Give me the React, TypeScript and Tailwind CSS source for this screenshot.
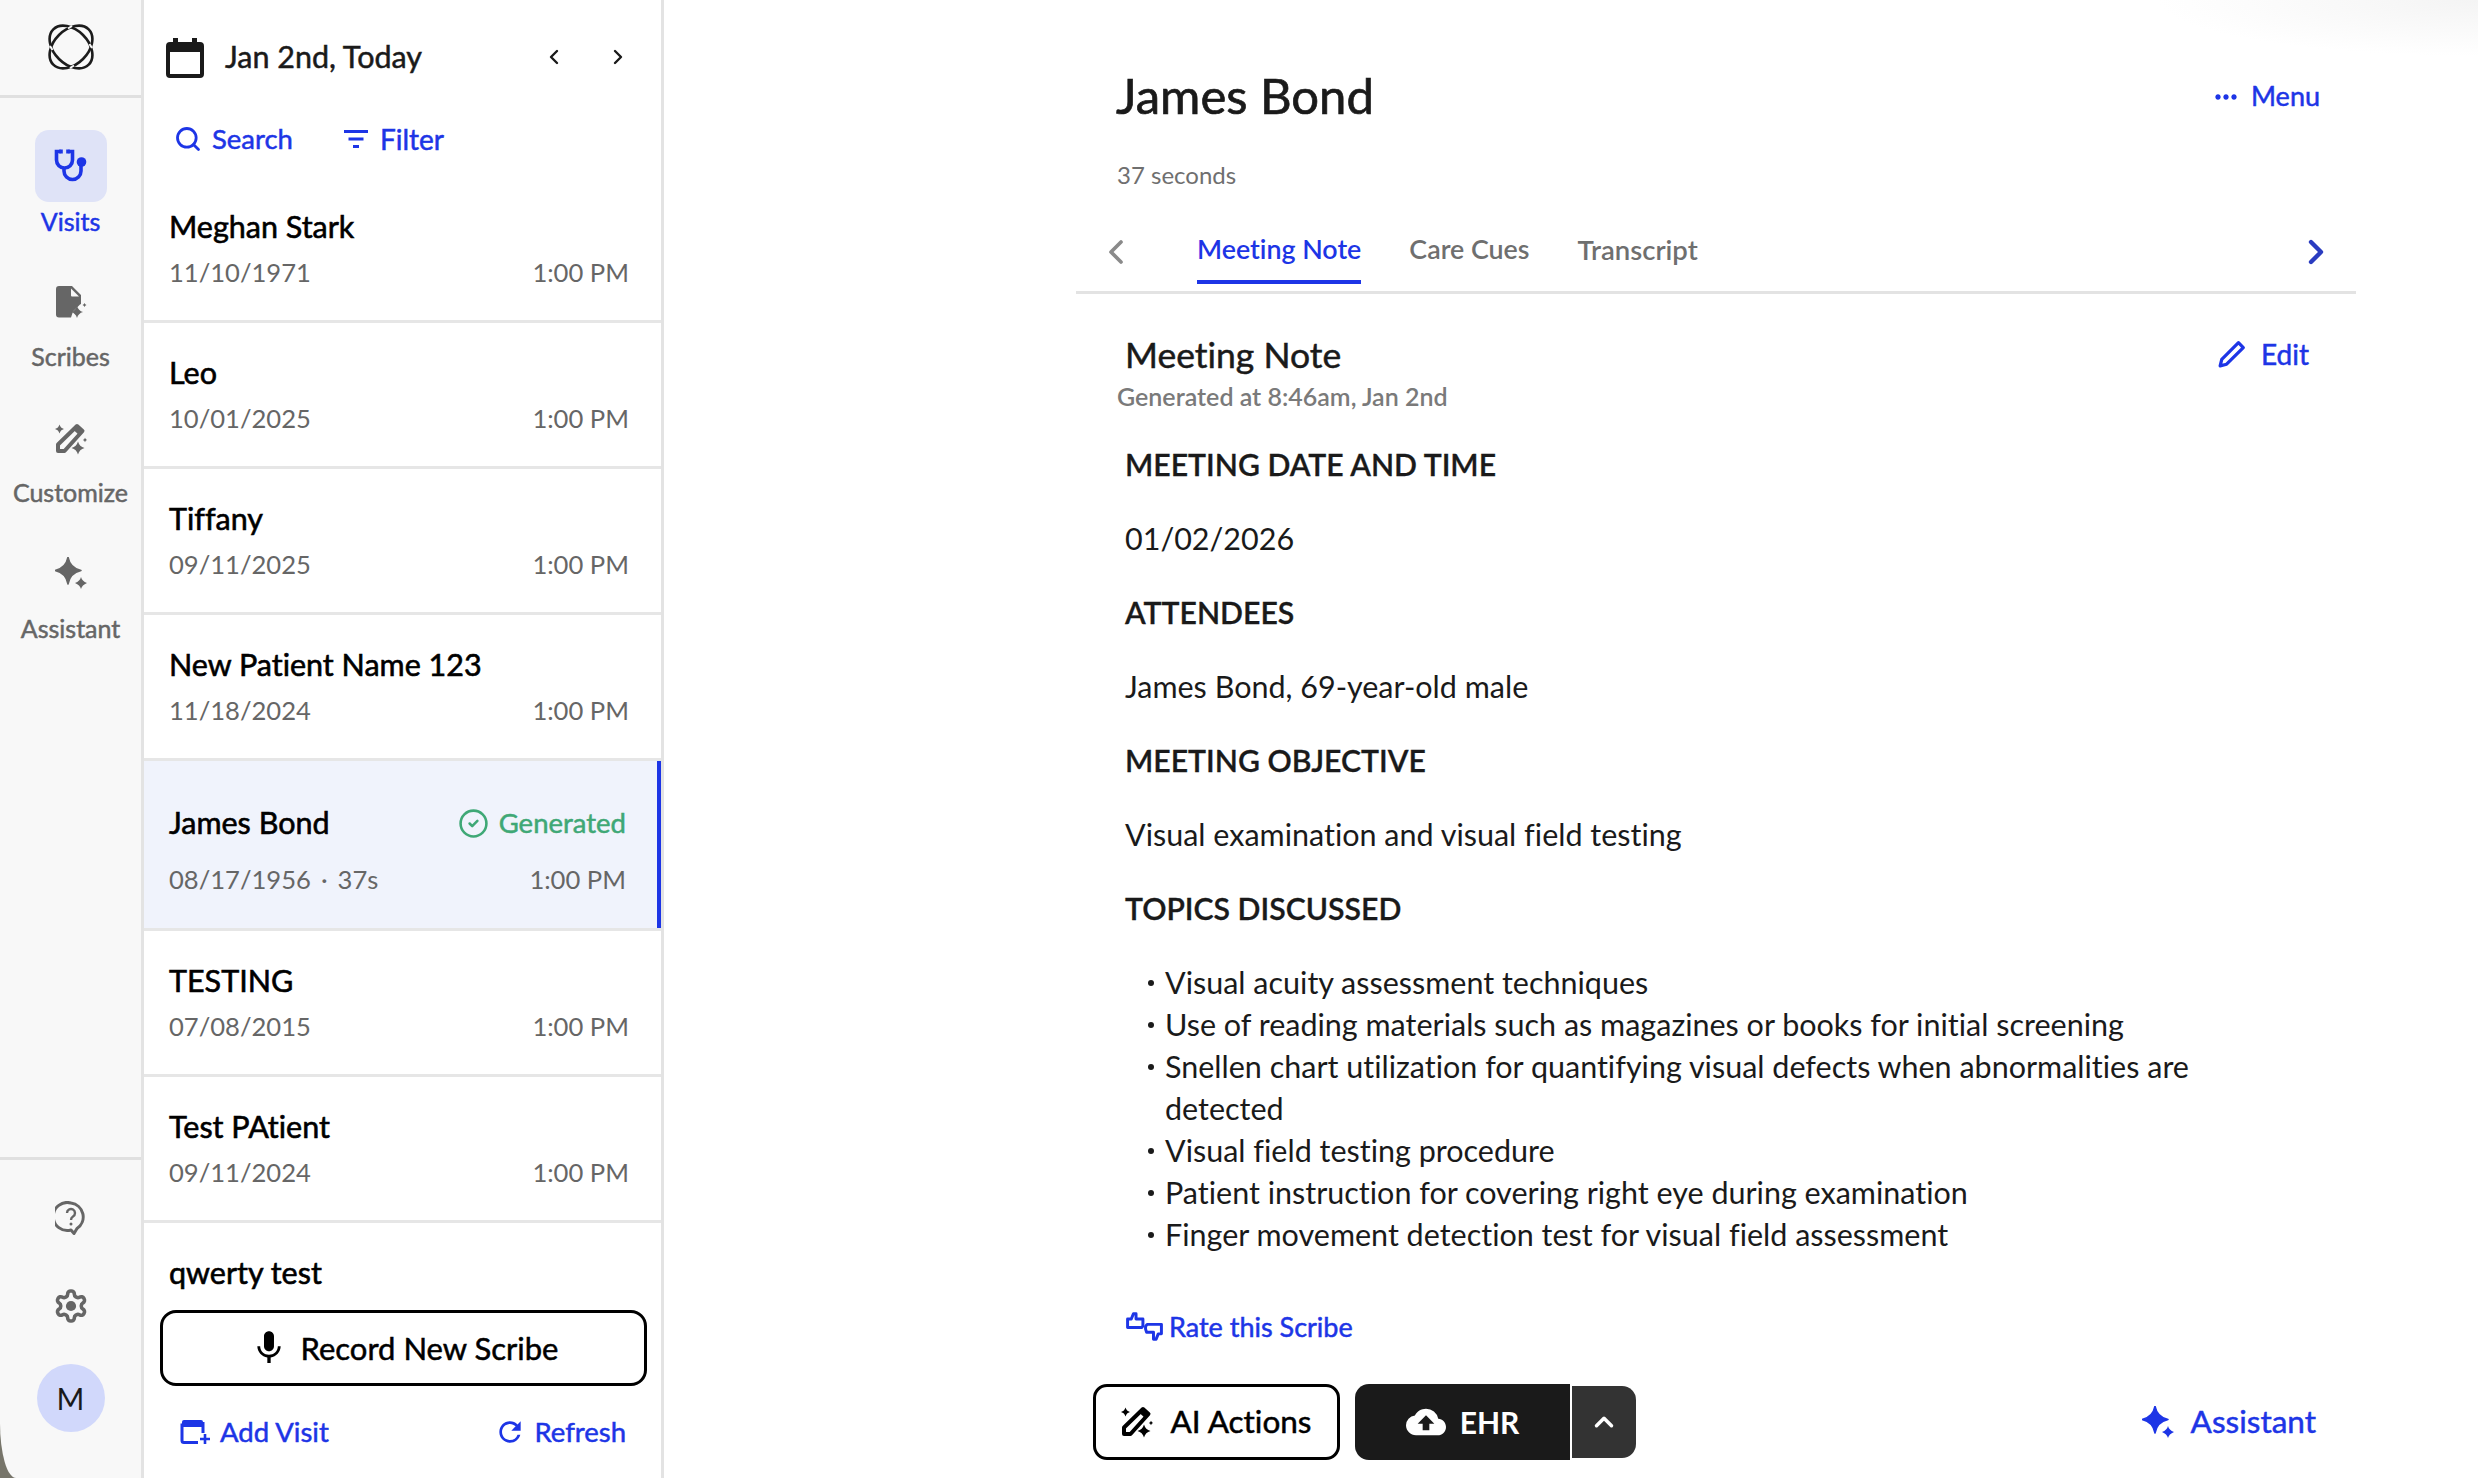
import { ChevronLeft, ChevronRight, ChevronUp, CircleCheck, Search } from 'lucide-react';
import { MdCloudUpload, MdMic, MdMoreHoriz, MdRefresh } from 'react-icons/md';

interface Visit {
  name: string;
  dob: string;
}

const visitsTop: Visit[] = [
  { name: 'Meghan Stark', dob: '11/10/1971' },
  { name: 'Leo', dob: '10/01/2025' },
  { name: 'Tiffany', dob: '09/11/2025' },
  { name: 'New Patient Name 123', dob: '11/18/2024' },
];

const visitsBottom: Visit[] = [
  { name: 'TESTING', dob: '07/08/2015' },
  { name: 'Test PAtient', dob: '09/11/2024' },
];

const topics = [
  ['Visual acuity assessment techniques'],
  ['Use of reading materials such as magazines or books for initial screening'],
  ['Snellen chart utilization for quantifying visual defects when abnormalities are', 'detected'],
  ['Visual field testing procedure'],
  ['Patient instruction for covering right eye during examination'],
  ['Finger movement detection test for visual field assessment'],
];

const sections = [
  { title: 'MEETING DATE AND TIME', body: '01/02/2026' },
  { title: 'ATTENDEES', body: 'James Bond, 69-year-old male' },
  { title: 'MEETING OBJECTIVE', body: 'Visual examination and visual field testing' },
];

function Sparkle({ x, y, r }: { x: number; y: number; r: number }) {
  const c = r * 0.22;
  return (
    <path
      d={`M${x} ${y - r}Q${x + c} ${y - c} ${x + r} ${y}Q${x + c} ${y + c} ${x} ${y + r}Q${x - c} ${y + c} ${x - r} ${y}Q${x - c} ${y - c} ${x} ${y - r}Z`}
      fill="currentColor"
    />
  );
}

function WandIcon({ className }: { className: string }) {
  return (
    <svg className={className} viewBox="0 0 32 32" fill="none">
      <path d="M22 3l5.500 5L9.500 28H3v-6.500z" stroke="currentColor" strokeWidth="4" strokeLinejoin="round" />
      <path d="M22 2l6.500 6-4 4.500-6.500-6z" fill="currentColor" />
      <Sparkle x={4.500} y={6} r={4.500} />
      <Sparkle x={23} y={25} r={6.500} />
      <Sparkle x={30} y={17} r={2.200} />
    </svg>
  );
}

function StarsIcon({ className }: { className: string }) {
  return (
    <svg className={className} viewBox="0 0 32 32" fill="none">
      <path d="M13 0Q15 11 26 13.500Q15 16 13 27Q11 16 0 13.500Q11 11 13 0Z" fill="currentColor" stroke="currentColor" strokeWidth="1.500" strokeLinejoin="round" />
      <path d="M26 20Q27 24 32 26Q27 28 26 32Q25 28 20 26Q25 24 26 20Z" fill="currentColor" />
    </svg>
  );
}

function Sidebar() {
  return (
    <aside className="w-[144px] shrink-0 flex flex-col bg-[#f8f8f8] border-r-[3px] border-[#e3e3e3] rounded-bl-[16px_55px]">
      <div className="h-[98px] shrink-0 flex items-center justify-center border-b-[3px] border-[#e0e0e0] pb-[2px]">
        <svg className="w-[46px] h-[46px] text-[#1c1c1c]" viewBox="0 0 46 46" fill="none" stroke="currentColor" strokeWidth="2.6">
          <ellipse cx="23" cy="23" rx="25" ry="17" transform="rotate(45 23 23)" />
          <ellipse cx="23" cy="23" rx="25" ry="17" transform="rotate(-45 23 23)" />
          {/* weave gaps where the two rings cross */}
          <path d="M20 4.500l4-2.500M26 41.500l-4 2.500M4.500 26l-2.500-4M41.500 20l2.500 4" stroke="#f8f8f8" strokeWidth="2" />
        </svg>
      </div>

      <nav className="flex flex-col items-center pt-[32px]">
        <div className="w-[72px] h-[72px] rounded-[14px] bg-[#dfe3f7] flex items-center justify-center">
          <svg className="w-[34px] h-[34px] text-[#1d35e6]" viewBox="0 0 34 34" fill="none" stroke="currentColor" strokeWidth="3.600">
            <path d="M7 2.500H2.500v8.500a8 8 0 0 0 16 0V2.500H14" />
            <path d="M10 19v3a8.500 8.500 0 0 0 17 0v-7" />
            <circle cx="27.500" cy="13" r="4.800" fill="currentColor" stroke="none" />
            <path d="M7 0.500v4M14 0.500v4" />
          </svg>
        </div>
        <span className="mt-[3px] text-[25px] leading-[32px] [-webkit-text-stroke:0.5px] text-[#1d35e6]">Visits</span>

        <svg className="mt-[49px] w-[32px] h-[32px] text-[#666]" viewBox="0 0 32 32">
          <path d="M4 0h13l9 9v9l-1 .5-7 7-2 6H4a3 3 0 0 1-3-3V3a3 3 0 0 1 3-3z" fill="currentColor" />
          <path d="M16 2.500v7a1 1 0 0 0 1 1h7z" fill="#f8f8f8" />
          <Sparkle x={22} y={26} r={6} />
          <Sparkle x={29.500} y={19} r={2} />
        </svg>
        <span className="mt-[22px] text-[25px] leading-[32px] [-webkit-text-stroke:0.5px] text-[#666]">Scribes</span>

        <WandIcon className="mt-[51px] w-[32px] h-[32px] text-[#666]" />
        <span className="mt-[21px] text-[25px] leading-[32px] [-webkit-text-stroke:0.5px] text-[#666]">Customize</span>

        <StarsIcon className="mt-[49px] w-[32px] h-[32px] text-[#666]" />
        <span className="mt-[23px] text-[25px] leading-[32px] [-webkit-text-stroke:0.5px] text-[#666]">Assistant</span>
      </nav>

      <div className="mt-auto h-[321px] shrink-0 border-t-[3px] border-[#e0e0e0] flex flex-col items-center">
        <svg className="mt-[41px] w-[32px] h-[34px] text-[#666]" viewBox="0 0 32 34" fill="none" stroke="currentColor" strokeWidth="3">
          <path d="M16 2a14 14 0 1 0 0 27l3 3.500 3-5a14 14 0 0 0-6-25.500z" strokeLinejoin="round" />
          <path d="M12 12a4 4 0 1 1 6 3.500c-1.500 1-2 1.500-2 3.500" strokeWidth="2.400" />
          <circle cx="16" cy="23" r="1.500" fill="currentColor" stroke="none" />
        </svg>
        <svg className="mt-[53px] w-[36px] h-[36px] text-[#666]" viewBox="0 0 24 24" fill="none" stroke="currentColor" strokeWidth="2.400">
          <path d="M12.220 2h-.440a2 2 0 0 0-2 2v.180a2 2 0 0 1-1 1.730l-.430.250a2 2 0 0 1-2 0l-.150-.080a2 2 0 0 0-2.730.730l-.220.380a2 2 0 0 0 .730 2.730l.150.100a2 2 0 0 1 1 1.720v.510a2 2 0 0 1-1 1.740l-.150.090a2 2 0 0 0-.730 2.730l.220.380a2 2 0 0 0 2.730.730l.150-.080a2 2 0 0 1 2 0l.430.250a2 2 0 0 1 1 1.730V20a2 2 0 0 0 2 2h.440a2 2 0 0 0 2-2v-.180a2 2 0 0 1 1-1.730l.430-.250a2 2 0 0 1 2 0l.150.080a2 2 0 0 0 2.730-.730l.220-.390a2 2 0 0 0-.730-2.730l-.150-.080a2 2 0 0 1-1-1.740v-.500a2 2 0 0 1 1-1.740l.150-.090a2 2 0 0 0 .730-2.730l-.220-.380a2 2 0 0 0-2.730-.730l-.150.080a2 2 0 0 1-2 0l-.430-.250a2 2 0 0 1-1-1.730V4a2 2 0 0 0-2-2z" />
          <circle cx="12" cy="12" r="3.400" fill="currentColor" stroke="none" />
        </svg>
        <div className="mt-[40px] w-[68px] h-[68px] rounded-full bg-[#d1d8fb] flex items-center justify-center text-[30px] text-[#1a1a1a]">M</div>
      </div>
    </aside>
  );
}

function VisitRow({ visit }: { visit: Visit }) {
  return (
    <div className="h-[146px] shrink-0 border-b-[3px] border-[#e6e6e6] pl-[25px] pr-[32px] pt-[30px]">
      <p className="text-[30.500px] leading-[38px] [-webkit-text-stroke:0.6px] text-black">{visit.name}</p>
      <div className="mt-[9px] flex justify-between text-[25.600px] leading-[36px] text-[#666]">
        <span>{visit.dob}</span>
        <span>1:00 PM</span>
      </div>
    </div>
  );
}

function VisitList() {
  return (
    <section className="w-[520px] shrink-0 flex flex-col bg-white border-r-[3px] border-[#e3e3e3]">
      {/* Date header */}
      <div className="h-[177px] shrink-0 pl-[22px]">
        <div className="flex items-center h-[114px] pr-[31px]">
          <svg className="w-[38px] h-[40px] mt-[1px] text-[#1a1a1a]" viewBox="0 0 38 40">
            <path d="M7 0h5v4h14V0h5v4h3a4 4 0 0 1 4 4v28a4 4 0 0 1-4 4H4a4 4 0 0 1-4-4V8a4 4 0 0 1 4-4h3z" fill="currentColor" />
            <rect x="4" y="14" width="30" height="22" fill="#fff" />
          </svg>
          <span className="ml-[21px] text-[30.500px] [-webkit-text-stroke:0.5px] text-[#1a1a1a]">Jan 2nd, Today</span>
          <ChevronLeft className="ml-auto w-[24px] h-[24px] text-[#1a1a1a]" strokeWidth={2.4} />
          <ChevronRight className="ml-[40px] w-[24px] h-[24px] text-[#1a1a1a]" strokeWidth={2.4} />
        </div>
        <div className="flex items-center pl-[8px] -mt-[1px] text-[#1d35e6] text-[27.500px] leading-[52px] [-webkit-text-stroke:0.5px]">
          <Search className="w-[28px] h-[28px]" strokeWidth={2.4} />
          <span className="ml-[10px]">Search</span>
          <svg className="ml-[50px] w-[26px] h-[20px]" viewBox="0 0 26 20" fill="none" stroke="currentColor" strokeWidth="3">
            <path d="M1 2.500h24M5.500 10h15M10 17.500h6" />
          </svg>
          <span className="ml-[11px] text-[28px]">Filter</span>
        </div>
      </div>

      {/* Visits */}
      <div className="flex-1 min-h-0 overflow-hidden flex flex-col">
        {visitsTop.map(v => <VisitRow key={v.name} visit={v} />)}

        <div className="h-[170px] shrink-0 relative bg-[#f0f3fc] border-b-[3px] border-[#e6e6e6] pl-[25px] pr-[35px] pt-[43px]">
          <div className="flex items-center justify-between h-[38px]">
            <span className="text-[30.500px] [-webkit-text-stroke:0.6px] text-black">James Bond</span>
            <span className="flex items-center gap-[10px] text-[27.500px] [-webkit-text-stroke:0.5px] text-[#3fa876]">
              <CircleCheck className="w-[31px] h-[31px]" strokeWidth={2} />
              Generated
            </span>
          </div>
          <div className="mt-[19px] flex justify-between text-[25.600px] leading-[36px] text-[#666]">
            <span>08/17/1956<span className="mx-[10px]">·</span>37s</span>
            <span>1:00 PM</span>
          </div>
          <div className="absolute right-0 top-0 bottom-0 w-[4px] bg-[#1d35e6]" />
        </div>

        {visitsBottom.map(v => <VisitRow key={v.name} visit={v} />)}

        <div className="shrink-0 pl-[25px] pt-[30px]">
          <p className="text-[30.500px] leading-[38px] [-webkit-text-stroke:0.6px] text-black">qwerty test</p>
        </div>
      </div>

      {/* Footer */}
      <div className="h-[178px] shrink-0 bg-white pl-[16px] pr-[14px] pt-[10px]">
        <button className="w-[487px] h-[76px] flex items-center justify-center border-[3px] border-black rounded-[16px] text-[31px] [-webkit-text-stroke:0.5px] text-black">
          <MdMic className="w-[40px] h-[40px]" />
          <span className="ml-[12px]">Record New Scribe</span>
        </button>
        <div className="mt-[25px] flex items-center justify-between pl-[20px] pr-[21px] text-[27.500px] [-webkit-text-stroke:0.5px] text-[#1d35e6]">
          <span className="flex items-center gap-[10px]">
            <svg className="w-[30px] h-[26px]" viewBox="0 0 30 26" fill="none">
              <path d="M2 6h21M2 4.500v17a2 2 0 0 0 2 2h14M23 3v11" stroke="currentColor" strokeWidth="3" />
              <path d="M2 3a2 2 0 0 1 2-2h17a2 2 0 0 1 2 2v5H2z" fill="currentColor" />
              <path d="M25 15v10M20 20h10" stroke="currentColor" strokeWidth="2.600" />
            </svg>
            Add Visit
          </span>
          <span className="flex items-center gap-[10px]">
            <MdRefresh className="w-[32px] h-[32px] -mr-[2px]" />
            Refresh
          </span>
        </div>
      </div>
    </section>
  );
}

function NoteBody() {
  return (
    <div className="pl-[49px] pr-[100px] text-[#1a1a1a]">
      {sections.map(s => (
        <div key={s.title} className="h-[148px]">
          <p className="h-[74px] flex items-center pt-[2px] text-[30.200px] font-semibold [-webkit-text-stroke:0.3px]">{s.title}</p>
          <p className="h-[74px] flex items-center pt-[2px] text-[30.500px]">{s.body}</p>
        </div>
      ))}
      <p className="h-[74px] flex items-center pt-[2px] text-[30.200px] font-semibold [-webkit-text-stroke:0.3px]">TOPICS DISCUSSED</p>
      <ul className="mt-[16px] text-[30.500px] leading-[42px]">
        {topics.map(lines => (
          <li key={lines[0]} className="relative pl-[40px]">
            <span className="absolute left-[23px] top-[19px] w-[6px] h-[6px] rounded-full bg-[#1a1a1a]" />
            {lines.map(line => <span key={line} className="block">{line}</span>)}
          </li>
        ))}
      </ul>
    </div>
  );
}

function ScribeDetail() {
  return (
    <main className="flex-1 min-w-0 relative flex flex-col bg-white pl-[412px] pr-[122px]">
      <div className="absolute top-0 right-0 w-[320px] h-[56px] bg-[radial-gradient(ellipse_320px_56px_at_100%_0,#f4f4f4,#ffffff)]" />

      {/* Title */}
      <div className="h-[135px] shrink-0 flex items-center justify-between pl-[40px] pr-[36px] pt-[55px]">
        <h1 className="text-[49px] leading-[78px] [-webkit-text-stroke:0.7px] text-[#1a1a1a]">James Bond</h1>
        <span className="flex items-center gap-[9px] pt-[3px] text-[27px] [-webkit-text-stroke:0.5px] text-[#1d35e6]">
          <MdMoreHoriz className="w-[32px] h-[32px]" />
          Menu
        </span>
      </div>
      <p className="mt-[23px] h-[34px] pl-[41px] text-[24px] leading-[34px] text-[#6f6f6f]">37 seconds</p>

      {/* Tabs */}
      <div className="mt-[25px] h-[77px] shrink-0 flex border-b-[3px] border-[#e3e3e3] relative">
        <ChevronLeft className="absolute left-[20px] top-[15px] w-[40px] h-[40px] text-[#8a8a8a]" strokeWidth={2.2} />
        <div className="ml-[121px] h-[67px] flex gap-[48px] text-[26.800px] font-semibold">
          <span className="h-full pt-[12px] border-b-[4px] border-[#1d35e6] text-[#1d35e6]">Meeting Note</span>
          <span className="pt-[12px] text-[#6f6f6f]">Care Cues</span>
          <span className="pt-[12px] text-[#6f6f6f] text-[27.500px]">Transcript</span>
        </div>
        <ChevronRight className="absolute right-[20px] top-[15px] w-[40px] h-[40px] text-[#2a3cc0]" strokeWidth={2.6} />
      </div>

      {/* Note header */}
      <div className="mt-[37px] h-[48px] shrink-0 flex items-center justify-between pl-[49px] pr-[47px]">
        <h2 className="text-[35.500px] [-webkit-text-stroke:0.5px] text-[#1a1a1a]">Meeting Note</h2>
        <span className="flex items-center gap-[15px] -mt-[3px] text-[28px] [-webkit-text-stroke:0.5px] text-[#1d35e6]">
          <svg className="w-[28px] h-[28px]" viewBox="0 0 26 26" fill="none" stroke="currentColor" strokeWidth="3" strokeLinejoin="round">
            <path d="M19 2.500l4.500 4.500L8 22.500l-6 1.500 1.500-6z" />
          </svg>
          Edit
        </span>
      </div>
      <p className="h-[36px] shrink-0 pl-[41px] text-[25px] leading-[34px] font-semibold text-[#7a7a7a]">Generated at 8:46am, Jan 2nd</p>

      <div className="mt-[12px]">
        <NoteBody />
      </div>

      {/* Rate */}
      <div className="mt-[52px] ml-[50px] flex items-center gap-[6px] text-[27px] [-webkit-text-stroke:0.5px] text-[#1d35e6]">
        <svg className="w-[37px] h-[30px]" viewBox="0 0 35 28" fill="none" stroke="currentColor" strokeWidth="2.800" strokeLinejoin="round">
          <path d="M1.500 6.500H5L7 1.500h2.500v5H16v6.500l-1 1.500H1.500z" />
          <path d="M33.500 11.500H20L18.500 13.500v2.500l1 3H26v6.500h2.500l2-5h3z" />
        </svg>
        Rate this Scribe
      </div>

      {/* Actions */}
      <div className="mt-auto mb-[18px] ml-[17px] flex items-center pr-[40px]">
        <button className="w-[247px] h-[76px] flex items-center justify-center gap-[17px] border-[3px] border-black rounded-[14px] text-[31.500px] [-webkit-text-stroke:0.5px] text-black">
          <WandIcon className="w-[32px] h-[32px]" />
          AI Actions
        </button>
        <button className="ml-[15px] w-[215px] h-[76px] flex items-center justify-center gap-[14px] bg-[#1a1a1a] rounded-l-[14px] text-[30px] font-bold text-white">
          <MdCloudUpload className="w-[40px] h-[40px]" />
          EHR
        </button>
        <button className="ml-[2px] w-[64px] h-[72px] flex items-center justify-center bg-[#333] rounded-r-[14px] text-white">
          <ChevronUp className="w-[30px] h-[30px]" strokeWidth={2.8} />
        </button>
        <span className="ml-auto flex items-center gap-[17px] text-[31.500px] [-webkit-text-stroke:0.5px] text-[#1d35e6]">
          <StarsIcon className="w-[32px] h-[32px]" />
          Assistant
        </span>
      </div>
    </main>
  );
}

export default function App() {
  return (
    <div className="w-[2478px] h-[1478px] flex overflow-hidden bg-[#77756a] font-['Lato','Liberation_Sans',sans-serif] [font-variant-ligatures:none]">
      <Sidebar />
      <VisitList />
      <ScribeDetail />
    </div>
  );
}
